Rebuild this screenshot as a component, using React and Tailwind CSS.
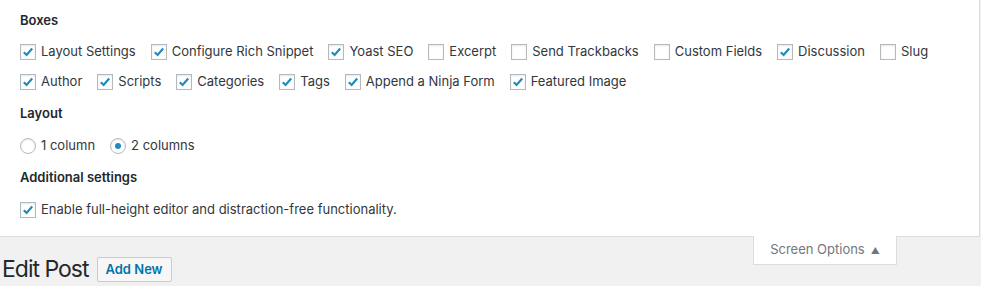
import React from "react";

const font = { fontFamily: "Inter, 'Liberation Sans', Arial, sans-serif" };

function Box({ checked }) {
  return (
    <span className="relative inline-flex h-4 w-4 shrink-0 items-center justify-center border border-[#b4b9be] bg-white shadow-[inset_0_1px_2px_rgba(0,0,0,0.1)]">
      {checked && (
        <svg viewBox="0 0 16 16" className="h-4 w-4">
          <path d="M3.2 8.2 L6.4 11.4 L12.8 4" fill="none" stroke="#1e8cbe" strokeWidth="2.5" strokeLinecap="butt" strokeLinejoin="miter" />
        </svg>
      )}
    </span>
  );
}

function Radio({ checked }) {
  return (
    <span className="inline-flex h-4 w-4 shrink-0 items-center justify-center rounded-full border border-[#b4b9be] bg-white shadow-[inset_0_1px_2px_rgba(0,0,0,0.1)]">
      {checked && <span className="h-[6px] w-[6px] rounded-full bg-[#1e8cbe]" />}
    </span>
  );
}

function Item({ checked, label, radio }) {
  return (
    <label className="mr-[15px] inline-flex shrink-0 items-center gap-[5px] whitespace-nowrap text-[13px] text-[#32373c]">
      {radio ? <Radio checked={checked} /> : <Box checked={checked} />}
      <span>{label}</span>
    </label>
  );
}

const row1 = [
  [true, "Layout Settings"],
  [true, "Configure Rich Snippet"],
  [true, "Yoast SEO"],
  [false, "Excerpt"],
  [false, "Send Trackbacks"],
  [false, "Custom Fields"],
  [true, "Discussion"],
  [false, "Slug"],
];
const row2 = [
  [true, "Author"],
  [true, "Scripts"],
  [true, "Categories"],
  [true, "Tags"],
  [true, "Append a Ninja Form"],
  [true, "Featured Image"],
];

export default function App() {
  return (
    <div className="h-[286px] w-[981px] overflow-hidden bg-[#f1f1f1]" style={font}>
      <div className="mr-[1px] h-[237px] border-r border-b border-[#dddddd] bg-white px-5 pt-[10px]">
        <h5 className="h-5 text-[13px] font-semibold leading-5 text-[#23282d]">Boxes</h5>
        <div className="mt-[14px] flex h-4 items-center">
          {row1.map(([c, l]) => (
            <Item key={l} checked={c} label={l} />
          ))}
        </div>
        <div className="mt-[14px] flex h-4 items-center">
          {row2.map(([c, l]) => (
            <Item key={l} checked={c} label={l} />
          ))}
        </div>
        <h5 className="mt-[13px] h-5 text-[13px] font-semibold leading-5 text-[#23282d]">Layout</h5>
        <div className="mt-[15px] flex h-4 items-center">
          <Item radio checked={false} label="1 column" />
          <Item radio checked={true} label="2 columns" />
        </div>
        <h5 className="mt-[13px] h-5 text-[13px] font-semibold leading-5 text-[#23282d]">Additional settings</h5>
        <div className="mt-[15px] flex h-4 items-center">
          <Item checked label="Enable full-height editor and distraction-free functionality." />
        </div>
      </div>
      <div className="flex justify-end pr-[84px]">
        <div className="-mt-px flex h-[29px] w-[144px] items-center justify-center gap-[6px] border-x border-b border-[#dddddd] bg-white text-[13px] text-[#72777c]">
          <span>Screen Options</span>
          <span className="text-[9px] leading-none">▲</span>
        </div>
      </div>
      <div className="-mt-[10px] flex items-center gap-[8px] pl-[2px]">
        <h1 className="text-[23px] font-normal leading-[29px] tracking-[-1px] text-[#23282d]">Edit Post</h1>
        <button className="h-[25px] rounded-[2px] border border-[#cccccc] bg-[#f7f7f7] px-2 text-[13px] font-semibold text-[#0073aa]">
          Add New
        </button>
      </div>
    </div>
  );
}
